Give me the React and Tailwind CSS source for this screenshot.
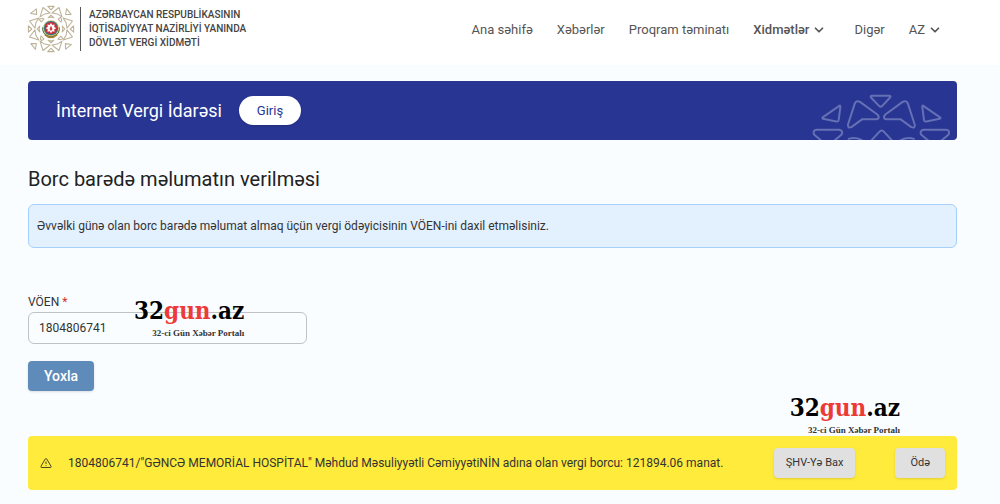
import React, { useState } from 'react'
import { ChevronDown } from 'lucide-react'

const NAV = [
  { label: 'Ana səhifə' },
  { label: 'Xəbərlər' },
  { label: 'Proqram təminatı' },
  { label: 'Xidmətlər', menu: true, active: true },
  { label: 'Digər' },
  { label: 'AZ', menu: true },
]

// One quarter of the ornament ring, centred on 0,0
function Quarter({ angle }) {
  return (
    <g transform={`rotate(${angle})`}>
      <path d="M-28 -198H28L0 -168Z" />
      <path d="M-70 -188L-8 -140L-56 -132L-96 -106Z" />
      <path d="M70 -188L8 -140L56 -132L96 -106Z" />
      <path d="M-178 -136L-128 -176L-126 -128Z" />
      <path d="M0 -122L26 -98L0 -104L-26 -98Z" />
      <path d="M-104 -84Q-82 -98 -60 -88L-86 -62Z" />
    </g>
  )
}

function Emblem() {
  return (
    <svg viewBox="-210 -210 420 420" className="size-12 shrink-0" aria-hidden="true">
      <g fill="none" stroke="#bdb298" strokeWidth={9} strokeLinejoin="round">
        <Quarter angle={0} />
        <Quarter angle={90} />
        <Quarter angle={180} />
        <Quarter angle={270} />
      </g>
      <g transform="scale(1.25)">
        <circle r={66} fill="#fff" />
        <path d="M-60 -20A62 62 0 1 0 60 -20L46 28Q0 64 -46 28Z" fill="#4f7433" />
        <path d="M-44 40Q0 80 44 40" fill="none" stroke="#a87f35" strokeWidth={10} />
        <circle cy={-6} r={56} fill="#d9bd79" />
        <circle cy={-6} r={50} fill="#2f7b86" />
        <circle cy={-6} r={43} fill="#c9303c" />
        <path
          d="M0 -42L9 -28L25 -31L22 -15L36 -6L22 3L25 19L9 16L0 30L-9 16L-25 19L-22 3L-36 -6L-22 -15L-25 -31L-9 -28Z"
          fill="#fff"
        />
        <path d="M0 -24L8 -6Q13 8 0 12Q-13 8 -8 -6Z" fill="#d23f3c" />
      </g>
    </svg>
  )
}

function BannerPattern() {
  return (
    <svg
      viewBox="66 54 417 140"
      className="h-[47px] w-[139px] self-end"
      fill="none"
      stroke="#6670b4"
      strokeWidth={6}
      strokeLinejoin="round"
      strokeLinecap="round"
      aria-hidden="true"
    >
      <path d="M246 62H298Q304 62 300 67L277 92Q272 97 267 92L243 67Q240 62 246 62Z" />
      <path d="M194 86Q198 74 210 80L262 118Q272 130 259 132L217 132L184 156Q172 160 174 148Z" />
      <path d="M354 86Q350 74 338 80L286 118Q276 130 289 132L331 132L364 156Q377 160 374 148Z" />
      <path d="M148 92Q151 89 151 96L146 135Q145 140 139 139L99 131Q95 129 99 126Z" />
      <path d="M400 92Q397 89 397 96L402 135Q403 140 409 139L449 131Q454 129 449 126Z" />
      <path d="M96 198L72 178Q68 164 80 164H148Q160 167 155 178L131 198" />
      <path d="M452 198L476 178Q480 164 468 164H400Q389 167 393 178L417 198" />
      <path d="M242 198L270 168Q275 164 280 168L308 198" />
      <path d="M176 191Q198 184 220 197" />
      <path d="M372 191Q350 184 328 197" />
    </svg>
  )
}

function Portal({ className }) {
  return (
    <div className={`pointer-events-none absolute text-right font-bold text-black ${className}`}>
      <div className="font-['DejaVu_Serif_Condensed','DejaVu_Serif',serif] text-[24px] leading-7">
        32<span className="text-[#ee3a37]">gun</span>.az
      </div>
      <div className="font-['Liberation_Serif',serif] text-[9px] leading-4 text-[#333]">32-ci Gün Xəbər Portalı</div>
    </div>
  )
}

export default function App() {
  const [voen, setVoen] = useState('1804806741')

  return (
    <div className="min-h-screen bg-[#f9fdff] font-[Roboto,sans-serif] text-[#333]">
      <header className="flex h-[65px] items-start justify-between bg-white pr-[58px] pl-[27px]">
        <a href="#" className="mt-[5px] flex items-center gap-[5px]">
          <Emblem />
          <span className="border-l border-[#555] py-px pl-2 text-[10px] leading-[14px] font-medium text-[#444]">
            AZƏRBAYCAN RESPUBLİKASININ
            <br />
            İQTİSADİYYAT NAZİRLİYİ YANINDA
            <br />
            DÖVLƏT VERGİ XİDMƏTİ
          </span>
        </a>
        <nav className="mt-5 flex items-center gap-6 text-[13px] leading-5 text-[#555]">
          {NAV.map((item) => (
            <a key={item.label} href="#" className={`flex items-center gap-[3px] ${item.active ? 'pr-1 font-medium' : ''}`}>
              {item.label}
              {item.menu && <ChevronDown size={14} strokeWidth={3} />}
            </a>
          ))}
        </nav>
      </header>

      <main className="pt-4 pr-[43px] pb-4 pl-7">
        <section className="flex h-[59px] items-center rounded bg-[#283593] pr-1.5 pl-7">
          <h2 className="text-lg text-white">İnternet Vergi İdarəsi</h2>
          <button className="mr-auto ml-[17px] h-[29px] rounded-full bg-white px-[18px] text-[13px] text-[#283593] shadow">
            Giriş
          </button>
          <BannerPattern />
        </section>

        <h1 className="mt-[25px] text-xl leading-7 text-[#222]">Borc barədə məlumatın verilməsi</h1>
        <p className="mt-[11px] rounded-md border border-[#a5d0fa] bg-[#e3f0fe] px-2 py-[11px] text-[12px] leading-5">
          Əvvəlki günə olan borc barədə məlumat almaq üçün vergi ödəyicisinin VÖEN-ini daxil etməlisiniz.
        </p>

        <form className="relative mt-11" onSubmit={(e) => e.preventDefault()}>
          <label htmlFor="voen" className="block text-[12px] leading-5">
            VÖEN <span className="text-[#d32f2f]">*</span>
          </label>
          <input
            id="voen"
            value={voen}
            onChange={(e) => setVoen(e.target.value)}
            className="block h-8 w-[30%] rounded-md border border-[#bfc3c6] bg-transparent px-2.5 text-[12px]"
          />
          <button className="mt-[17px] block h-[30px] rounded-sm bg-[#5f8bba] px-4 text-[14px] font-medium text-white shadow">
            Yoxla
          </button>
          <Portal className="top-[5px] left-[106px]" />
        </form>

        <div role="alert" className="relative mt-[45px] flex h-[54px] items-center rounded bg-[#ffeb3b] pr-3 pl-3">
          <svg viewBox="0 0 24 24" className="size-3 shrink-0" fill="none" stroke="#4a4620" strokeWidth={2} strokeLinejoin="round" aria-hidden="true">
            <path d="M10.3 4.2 2 18.5Q1 21 3.5 21H20.5Q23 21 22 18.5L13.7 4.2Q12 2 10.3 4.2Z" />
            <path d="M12 9V14M12 16.5V18" />
          </svg>
          <p className="ml-4 text-[12px]">
            1804806741/"GƏNCƏ MEMORİAL HOSPİTAL" Məhdud Məsuliyyətli CəmiyyətiNİN adına olan vergi borcu: 121894.06 manat.
          </p>
          <button className="ml-auto h-[30px] shrink-0 rounded-sm bg-[#e0e0e0] px-3 text-[11px] shadow">ŞHV-Yə Bax</button>
          <button className="ml-10 h-[30px] shrink-0 rounded-sm bg-[#e0e0e0] px-[15px] text-[11px] shadow">Ödə</button>
          <Portal className="right-[57px] bottom-[52px]" />
        </div>
      </main>
    </div>
  )
}
